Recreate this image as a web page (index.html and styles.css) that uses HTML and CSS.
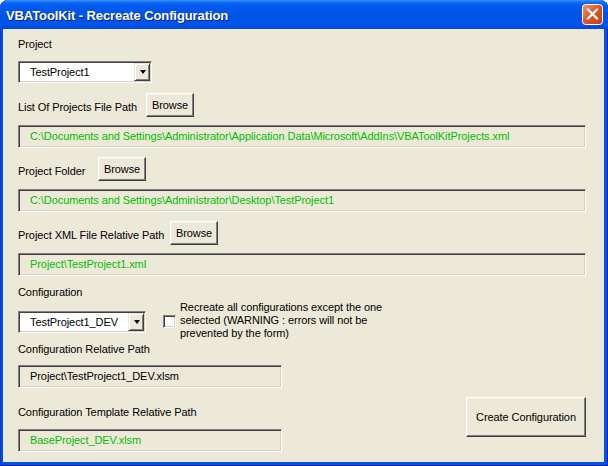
FILE: index.html
```html
<!DOCTYPE html>
<html>
<head>
<meta charset="utf-8">
<title>VBAToolKit - Recreate Configuration</title>
<link rel="stylesheet" href="styles.css">
</head>
<body>
<div class="window">
  <div class="titlebar">
    <span class="title">VBAToolKit - Recreate Configuration</span>
    <span class="close">
      <svg width="21" height="21" viewBox="0 0 21 21">
        <defs>
          <linearGradient id="cg" x1="0" y1="0" x2="1" y2="1">
            <stop offset="0" stop-color="#F3967A"/>
            <stop offset="0.45" stop-color="#E0592D"/>
            <stop offset="1" stop-color="#C03A10"/>
          </linearGradient>
        </defs>
        <rect x="0.5" y="0.5" width="20" height="20" rx="3" fill="url(#cg)" stroke="#ffffff"/>
        <path d="M6 5.5 L15 14.5 M15 5.5 L6 14.5" stroke="#ffffff" stroke-width="2.2" stroke-linecap="square"/>
      </svg>
    </span>
  </div>
  <div class="client">
    <div class="label lbl-project">Project</div>
    <div class="combo combo-project">
      <span class="combo-text">TestProject1</span>
      <span class="drop"><span class="tri"></span></span>
    </div>

    <div class="browse-row row1">
      <span class="label w1">List Of Projects File Path</span>
      <span class="btn browse">Browse</span>
    </div>
    <div class="field wide green">C:\Documents and Settings\Administrator\Application Data\Microsoft\AddIns\VBAToolKitProjects.xml</div>

    <div class="browse-row row2">
      <span class="label w2">Project Folder</span>
      <span class="btn browse">Browse</span>
    </div>
    <div class="field wide green">C:\Documents and Settings\Administrator\Desktop\TestProject1</div>

    <div class="browse-row row3">
      <span class="label w3">Project XML File Relative Path</span>
      <span class="btn browse">Browse</span>
    </div>
    <div class="field wide green">Project\TestProject1.xml</div>

    <div class="label lbl-config">Configuration</div>
    <div class="config-row">
      <div class="combo combo-config">
        <span class="combo-text">TestProject1_DEV</span>
        <span class="drop"><span class="tri"></span></span>
      </div>
      <span class="checkbox"></span>
      <span class="check-text">Recreate all configurations except the one<br>selected (WARNING : errors will not be<br>prevented by the form)</span>
    </div>

    <div class="bottom-row">
      <div class="bottom-left">
        <div class="label lbl-relpath">Configuration Relative Path</div>
        <div class="field narrow f4">Project\TestProject1_DEV.xlsm</div>
        <div class="label lbl-template">Configuration Template Relative Path</div>
        <div class="field narrow f5 green">BaseProject_DEV.xlsm</div>
      </div>
      <span class="btn create">Create Configuration</span>
    </div>
  </div>
</div>
</body>
</html>
```

FILE: styles.css
```css
html, body {
  margin: 0;
  padding: 0;
  width: 608px;
  height: 466px;
  overflow: hidden;
  background: #ffffff;
}

body {
  font-family: "Liberation Sans", Arial, sans-serif;
  font-size: 11px;
  letter-spacing: -0.08px;
  color: #000000;
}

.window {
  width: 608px;
  height: 466px;
  display: flex;
  flex-direction: column;
  background: #0054E3;
  border-radius: 8px 8px 0 0;
  box-shadow: inset 1px 0 0 #0831D9, inset -1px 0 0 #001EA0, inset 0 -1px 0 #001EA0;
}

.titlebar {
  height: 29px;
  flex: none;
  display: flex;
  align-items: center;
  justify-content: space-between;
  padding: 0 5px 0 6px;
  border-radius: 8px 8px 0 0;
  background: linear-gradient(to bottom, #3D95FF 0px, #1670F7 2px, #0560F0 4px, #0058EE 8px, #0054E3 16px, #0055EB 24px, #0048DC 29px);
}

.title {
  color: #ffffff;
  font-weight: bold;
  font-size: 13px;
  letter-spacing: -0.1px;
  text-shadow: 1px 1px 0 #0A1F8C;
  padding-top: 1px;
}

.close {
  width: 21px;
  height: 21px;
  display: block;
}

.close svg {
  display: block;
}

.client {
  flex: 1;
  margin: 0 4px 4px 3px;
  background: #ECE9D8;
  padding: 0 0 0 15px;
}

.label {
  line-height: 13px;
  white-space: nowrap;
}

.lbl-project {
  margin-top: 9px;
}

.combo {
  height: 22px;
  box-sizing: border-box;
  display: flex;
  align-items: stretch;
  justify-content: space-between;
  background: #ffffff;
  border: 1px solid;
  border-color: #808080 #ffffff #ffffff #808080;
  box-shadow: inset 1px 1px 0 #404040, inset -1px -1px 0 #D4D0C8;
  padding: 1px;
}

.combo-project {
  width: 134px;
  margin-top: 10px;
}

.combo-config {
  width: 128px;
  margin-top: 10px;
  flex: none;
}

.combo-text {
  padding-left: 10px;
  line-height: 18px;
}

.drop {
  width: 16px;
  box-sizing: border-box;
  background: #ECE9D8;
  border: 1px solid;
  border-color: #ECE9D8 #404040 #404040 #ECE9D8;
  box-shadow: inset 1px 1px 0 #ffffff, inset -1px -1px 0 #808080;
  display: flex;
  align-items: center;
  justify-content: center;
}

.tri {
  width: 0;
  height: 0;
  border-left: 3.5px solid transparent;
  border-right: 3.5px solid transparent;
  border-top: 4px solid #000000;
  margin-left: 1px;
}

.browse-row {
  display: flex;
  align-items: flex-start;
}

.browse-row .label {
  padding-top: 8px;
}

.row1 {
  margin-top: 10px;
}

.row2,
.row3 {
  margin-top: 9px;
}

.w1 {
  width: 128px;
}

.w2 {
  width: 80px;
}

.w3 {
  width: 152px;
}

.btn {
  box-sizing: border-box;
  display: flex;
  align-items: center;
  justify-content: center;
  background: #ECE9D8;
  border: 1px solid;
  border-color: #ffffff #404040 #404040 #ffffff;
  box-shadow: inset -1px -1px 0 #808080, inset 1px 1px 0 #F4F2E8;
  white-space: nowrap;
}

.browse {
  width: 48px;
  height: 24px;
  padding-bottom: 1px;
}

.field {
  height: 23px;
  box-sizing: border-box;
  border: 1px solid;
  border-color: #808080 #ffffff #ffffff #808080;
  box-shadow: inset 1px 1px 0 #404040, inset -1px -1px 0 #D4D0C8;
  padding-left: 11px;
  line-height: 20px;
  white-space: nowrap;
  overflow: hidden;
  background: #ECE9D8;
}

.wide {
  width: 568px;
  margin-top: 8px;
}

.narrow {
  width: 264px;
}

.green {
  color: #00C000;
}

.lbl-config {
  margin-top: 10px;
}

.config-row {
  display: flex;
  align-items: flex-start;
  margin-top: 2px;
}

.checkbox {
  width: 13px;
  height: 13px;
  box-sizing: border-box;
  flex: none;
  margin: 14px 0 0 17px;
  background: #ffffff;
  border: 1px solid;
  border-color: #808080 #ffffff #ffffff #808080;
  box-shadow: inset 1px 1px 0 #404040, inset -1px -1px 0 #D4D0C8;
}

.check-text {
  margin-left: 4px;
  line-height: 13px;
  white-space: nowrap;
}

.bottom-row {
  display: flex;
  justify-content: space-between;
  align-items: flex-end;
  width: 568px;
}

.lbl-relpath {
  margin-top: 3px;
}

.f4 {
  margin-top: 9px;
}

.lbl-template {
  margin-top: 18px;
}

.f5 {
  margin-top: 10px;
}

.create {
  width: 120px;
  height: 40px;
  margin-bottom: 15px;
}
```
